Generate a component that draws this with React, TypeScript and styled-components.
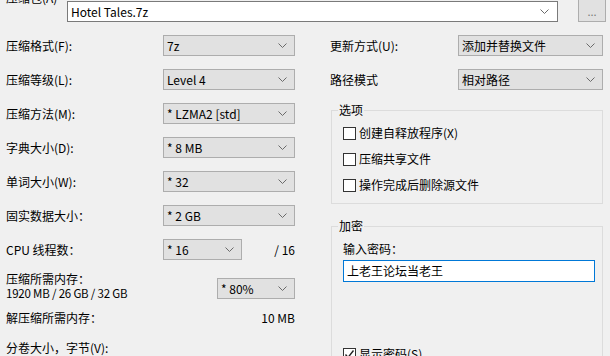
import React from 'react';
import styled, { createGlobalStyle } from 'styled-components';

const GlobalStyle = createGlobalStyle`
  body {
    margin: 0;
    background: #f0f0f0;
  }
  * {
    box-sizing: border-box;
  }
`;

const Chevron = () => (
  <svg width="9" height="5" viewBox="0 0 9 5">
    <polyline points="0.5,0.5 4.5,4.5 8.5,0.5" fill="none" stroke="#6a6a6a" strokeWidth="1" />
  </svg>
);

const CheckMark = () => (
  <svg width="11" height="11" viewBox="0 0 11 11">
    <polyline points="1.5,5.5 4,8.5 9.5,1.5" fill="none" stroke="#222" strokeWidth="1.4" />
  </svg>
);

function Select({ value, width }: { value: string; width: number }) {
  return (
    <SelectBox $w={width}>
      <span>{value}</span>
      <Chevron />
    </SelectBox>
  );
}

function Check({ label, checked }: { label: string; checked?: boolean }) {
  return (
    <CheckRow>
      <CheckBox>{checked && <CheckMark />}</CheckBox>
      <span>{label}</span>
    </CheckRow>
  );
}

const leftRows: [string, string][] = [
  ['压缩格式(F):', '7z'],
  ['压缩等级(L):', 'Level 4'],
  ['压缩方法(M):', '* LZMA2 [std]'],
  ['字典大小(D):', '* 8 MB'],
  ['单词大小(W):', '* 32'],
  ['固实数据大小：', '* 2 GB'],
];

export default function App() {
  return (
    <Window>
      <GlobalStyle />
      <Content>
        <TopRow>
          <ArchiveLabel>压缩包(A)</ArchiveLabel>
          <ArchiveCombo>
            <span>Hotel Tales.7z</span>
            <Chevron />
          </ArchiveCombo>
          <BrowseButton>...</BrowseButton>
        </TopRow>

        <Columns>
          <LeftColumn>
            {leftRows.map(([label, value]) => (
              <Row key={label}>
                <Label>{label}</Label>
                <Select value={value} width={132} />
              </Row>
            ))}
            <Row>
              <Label>CPU 线程数：</Label>
              <Select value="* 16" width={79} />
              <Value>/ 16</Value>
            </Row>
            <MemoryBlock>
              <MemoryLabel>
                <div>压缩所需内存：</div>
                <MemoryNumbers>1920 MB / 26 GB / 32 GB</MemoryNumbers>
              </MemoryLabel>
              <MemorySelect>
                <Select value="* 80%" width={78} />
              </MemorySelect>
            </MemoryBlock>
            <InfoLine>
              <span>解压缩所需内存：</span>
              <Value>10 MB</Value>
            </InfoLine>
            <VolumeLine>分卷大小，字节(V):</VolumeLine>
          </LeftColumn>

          <RightColumn>
            <Row>
              <RightLabel>更新方式(U):</RightLabel>
              <Select value="添加并替换文件" width={145} />
            </Row>
            <Row>
              <RightLabel>路径模式</RightLabel>
              <Select value="相对路径" width={145} />
            </Row>
            <Group>
              <Legend>选项</Legend>
              <OptionList>
                <Check label="创建自释放程序(X)" />
                <Check label="压缩共享文件" />
                <Check label="操作完成后删除源文件" />
              </OptionList>
            </Group>
            <Group $tall>
              <Legend>加密</Legend>
              <PasswordLabel>输入密码：</PasswordLabel>
              <PasswordInput>上老王论坛当老王</PasswordInput>
              <ShowPassword>
                <Check label="显示密码(S)" checked />
              </ShowPassword>
            </Group>
          </RightColumn>
        </Columns>
      </Content>
    </Window>
  );
}

const Window = styled.div`
  width: 610px;
  height: 356px;
  overflow: hidden;
  background: #f0f0f0;
  color: #000;
  font-family: 'Noto Sans CJK SC', 'Noto Sans', sans-serif;
  font-size: 12px;
  line-height: 16px;
`;

const Content = styled.div`
  margin-top: -10px;
  padding-left: 6px;
`;

const TopRow = styled.div`
  display: flex;
  align-items: flex-start;
`;

const ArchiveLabel = styled.span`
  width: 61px;
  line-height: 16px;
`;

const ArchiveCombo = styled.div`
  margin-top: 11px;
  width: 491px;
  height: 21px;
  background: #fff;
  border: 1px solid #7a7a7a;
  display: flex;
  align-items: center;
  justify-content: space-between;
  padding: 0 8px 0 3px;
`;

const BrowseButton = styled.div`
  margin-top: 9px;
  margin-left: 20px;
  width: 28px;
  height: 23px;
  background: #e1e1e1;
  border: 1px solid #adadad;
  color: #7a7a7a;
  font-size: 11px;
  display: flex;
  align-items: center;
  justify-content: center;
`;

const Columns = styled.div`
  display: grid;
  grid-template-columns: 289px 273px;
  column-gap: 35px;
  margin-top: 13px;
`;

const LeftColumn = styled.div`
  display: flex;
  flex-direction: column;
`;

const RightColumn = styled.div`
  display: flex;
  flex-direction: column;
`;

const Row = styled.div`
  display: flex;
  align-items: center;
  height: 21px;
  margin-bottom: 13px;
  white-space: nowrap;
`;

const Label = styled.span`
  width: 157px;
`;

const RightLabel = styled.span`
  width: 128px;
`;

const Value = styled.span`
  flex: 1;
  text-align: right;
`;

const SelectBox = styled.div<{ $w: number }>`
  width: ${(p) => p.$w}px;
  height: 21px;
  background: #e1e1e1;
  border: 1px solid #adadad;
  display: flex;
  align-items: center;
  justify-content: space-between;
  padding: 0 7px 0 3px;
  white-space: nowrap;
`;

const MemoryBlock = styled.div`
  display: flex;
  align-items: flex-start;
  margin-top: -2px;
`;

const MemoryLabel = styled.div`
  line-height: 15px;
`;

const MemoryNumbers = styled.div`
  font-size: 11.5px;
  letter-spacing: -0.2px;
`;

const MemorySelect = styled.div`
  margin-left: auto;
  margin-top: 7px;
`;

const InfoLine = styled.div`
  display: flex;
  margin-top: 9px;
`;

const VolumeLine = styled.div`
  margin-top: 14px;
`;

const Group = styled.fieldset<{ $tall?: boolean }>`
  margin: ${(p) => (p.$tall ? '0' : '-1px')} 0 ${(p) => (p.$tall ? '0' : '14px')} 1px;
  padding: 0 7px ${(p) => (p.$tall ? '40px' : '10px')} 11px;
  border: 1px solid #dcdcdc;
  min-width: 0;
`;

const Legend = styled.legend`
  margin-left: -5px;
  padding: 0 1px;
  line-height: 16px;
`;

const OptionList = styled.div`
  display: flex;
  flex-direction: column;
  gap: 10px;
  margin-top: 7px;
`;

const CheckRow = styled.div`
  display: flex;
  align-items: center;
  gap: 3px;
  height: 16px;
  white-space: nowrap;
`;

const CheckBox = styled.span`
  width: 13px;
  height: 13px;
  background: #fff;
  border: 1px solid #333;
  display: flex;
  align-items: center;
  justify-content: center;
`;

const PasswordLabel = styled.div`
  margin-top: 7px;
`;

const PasswordInput = styled.div`
  margin-top: 3px;
  width: 252px;
  height: 22px;
  background: #fff;
  border: 1px solid #0078d7;
  padding-left: 3px;
  display: flex;
  align-items: center;
`;

const ShowPassword = styled.div`
  margin-top: 64px;
`;
